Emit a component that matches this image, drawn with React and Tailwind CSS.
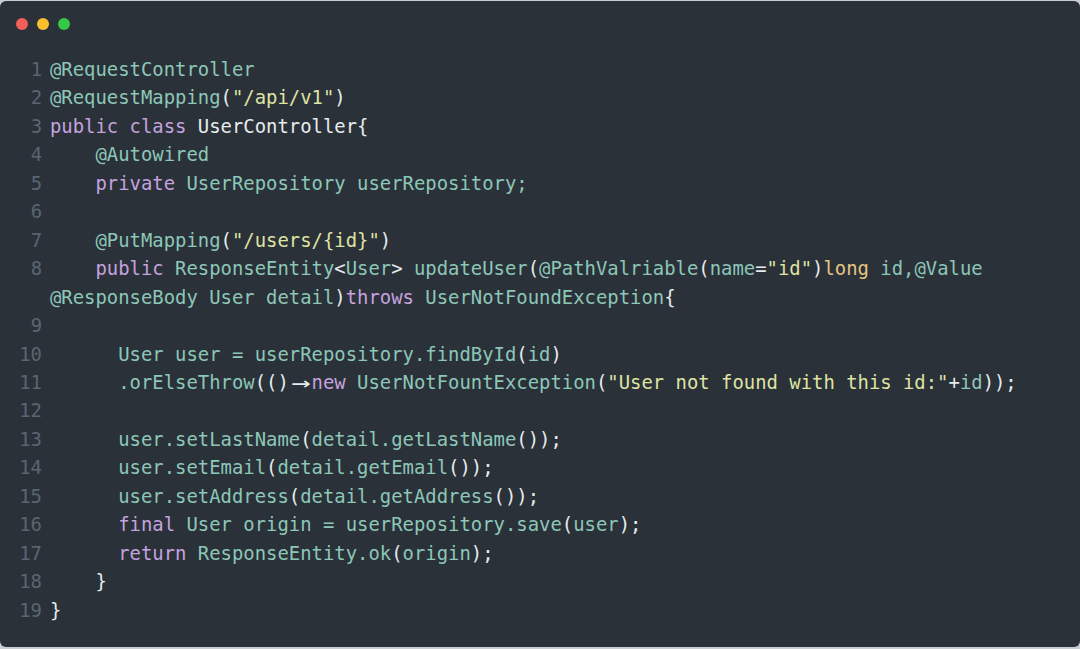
import React from "react";

const T = ({ children }) => <span className="text-[#8cc7b8]">{children}</span>;
const K = ({ children }) => <span className="text-[#c4a3df]">{children}</span>;
const W = ({ children }) => <span className="text-[#e6ecee]">{children}</span>;
const S = ({ children }) => <span className="text-[#dfe3a3]">{children}</span>;
const Y = ({ children }) => <span className="text-[#e5c583]">{children}</span>;
const Arrow = () => (
  <span className="inline-block w-[2ch] text-center text-[#e6ecee]">
    <span className="inline-block scale-x-[1.7] scale-y-[1.15]">{"→"}</span>
  </span>
);

const lines = [
  [1, <><T>{"@RequestController"}</T></>],
  [2, <><T>{"@RequestMapping"}</T><W>{"("}</W><S>{'"/api/v1"'}</S><W>{")"}</W></>],
  [3, <><K>{"public class"}</K><W>{" UserController{"}</W></>],
  [4, <><T>{"    @Autowired"}</T></>],
  [5, <><K>{"    private"}</K><T>{" UserRepository userRepository;"}</T></>],
  [6, <>{" "}</>],
  [7, <><T>{"    @PutMapping"}</T><W>{"("}</W><S>{'"/users/{id}"'}</S><W>{")"}</W></>],
  [8, <><K>{"    public"}</K><T>{" ResponseEntity"}</T><W>{"<"}</W><T>{"User"}</T><W>{">"}</W><T>{" updateUser"}</T><W>{"("}</W><T>{"@PathValriable"}</T><W>{"("}</W><T>{"name"}</T><W>{"="}</W><S>{'"id"'}</S><W>{")"}</W><Y>{"long"}</Y><T>{" id,@Value"}</T></>],
  [null, <><T>{"@ResponseBody User detail"}</T><W>{")"}</W><K>{"throws"}</K><T>{" UserNotFoundException"}</T><W>{"{"}</W></>],
  [9, <>{" "}</>],
  [10, <><T>{"      User user = userRepository.findById"}</T><W>{"("}</W><T>{"id"}</T><W>{")"}</W></>],
  [11, <><T>{"      .orElseThrow"}</T><W>{"(()"}</W><Arrow /><K>{"new"}</K><T>{" UserNotFountException"}</T><W>{"("}</W><S>{'"User not found with this id:"'}</S><W>{"+"}</W><T>{"id"}</T><W>{"));"}</W></>],
  [12, <>{" "}</>],
  [13, <><T>{"      user.setLastName"}</T><W>{"("}</W><T>{"detail.getLastName"}</T><W>{"());"}</W></>],
  [14, <><T>{"      user.setEmail"}</T><W>{"("}</W><T>{"detail.getEmail"}</T><W>{"());"}</W></>],
  [15, <><T>{"      user.setAddress"}</T><W>{"("}</W><T>{"detail.getAddress"}</T><W>{"());"}</W></>],
  [16, <><K>{"      final"}</K><T>{" User origin = userRepository.save"}</T><W>{"("}</W><T>{"user"}</T><W>{");"}</W></>],
  [17, <><K>{"      return"}</K><T>{" ResponseEntity.ok"}</T><W>{"("}</W><T>{"origin"}</T><W>{");"}</W></>],
  [18, <><W>{"    }"}</W></>],
  [19, <><W>{"}"}</W></>],
];

export default function App() {
  return (
    <div className="w-[1080px] h-[649px] bg-[#c9ced3] pt-px pb-[2px]">
      <div className="h-full rounded-[6px] bg-[#2b3139] overflow-hidden">
        <div className="flex gap-[9px] pl-[16px] pt-[17px]">
          <div className="w-[12px] h-[12px] rounded-full bg-[#f25f58]" />
          <div className="w-[12px] h-[12px] rounded-full bg-[#fbbe2e]" />
          <div className="w-[12px] h-[12px] rounded-full bg-[#34c748]" />
        </div>
        <div
          className="pt-[25px] text-[18.9px] leading-[28.45px] whitespace-pre"
          style={{ fontFamily: '"DejaVu Sans Mono", "Liberation Mono", monospace' }}
        >
          {lines.map(([n, content], i) => (
            <div key={i} className="flex">
              <div className="w-[42px] shrink-0 text-right text-[#5a6570]">
                {n === null ? "" : n}
              </div>
              <div className="pl-[8px]">{content}</div>
            </div>
          ))}
        </div>
      </div>
    </div>
  );
}
